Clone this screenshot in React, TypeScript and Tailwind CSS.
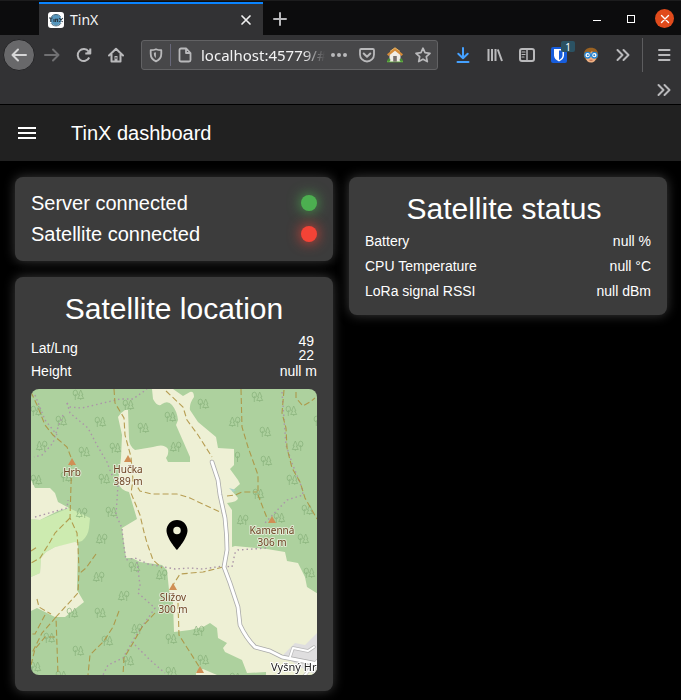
import React from "react";

type IconProps = { children: React.ReactNode; className?: string };

function Icon({ children, className = "text-[#b9b9bb]" }: IconProps) {
  return (
    <svg
      viewBox="0 0 16 16"
      className={`size-4 shrink-0 ${className}`}
      fill="none"
      stroke="currentColor"
      strokeWidth="2"
      strokeLinecap="round"
      strokeLinejoin="round"
      aria-hidden="true"
    >
      {children}
    </svg>
  );
}

function ToolButton({ label, children }: { label: string; children: React.ReactNode }) {
  return (
    <button type="button" aria-label={label} className="flex h-8 w-8 shrink-0 items-center justify-center">
      {children}
    </button>
  );
}

function TitleBar() {
  return (
    <div className="flex h-[35px] items-stretch border-t border-[#1c1c1d] bg-[#0c0c0d] pl-[39px] pt-px">
      <div className="flex w-56 items-center border-t-2 border-[#0a84ff] bg-[#323234] pl-[9px] pr-[9px]">
        <svg viewBox="0 0 16 16" className="size-4 shrink-0" aria-hidden="true">
          <rect width="16" height="16" rx="3" fill="#fff" />
          <circle cx="8" cy="8" r="5.4" fill="#5596bd" />
          <path d="M3 11.2a6 6 0 0 0 10 0M3.4 4.6a6 6 0 0 1 9.2 0" stroke="#426579" strokeWidth="1" fill="none" />
          <path d="M1 6h3.6M2.8 6v4M6 7v3M7.6 10V7.2h2V10M11.2 6l3.4 4M14.8 6l-3.6 4" stroke="#283641" strokeWidth="1.1" fill="none" />
        </svg>
        <span className="ml-[6px] flex-1 text-sm text-[#f4f4f5]">TinX</span>
        <button type="button" aria-label="Close tab" className="flex size-4 items-center justify-center">
          <Icon className="text-[#f0f0f0]">
            <path d="M4 4l8 8M12 4l-8 8" strokeWidth="1.7" />
          </Icon>
        </button>
      </div>
      <button type="button" aria-label="New tab" className="flex w-[34px] items-center justify-center">
        <Icon>
          <path d="M8 2v12M2 8h12" />
        </Icon>
      </button>
      <div className="ml-auto flex items-center pr-[7px]">
        <button type="button" aria-label="Minimize" className="flex w-[34px] justify-center">
          <span className="mt-1 h-px w-2 bg-white" />
        </button>
        <button type="button" aria-label="Maximize" className="flex w-[34px] justify-center">
          <span className="size-2 border border-white" />
        </button>
        <button
          type="button"
          aria-label="Close window"
          className="ml-[7px] flex size-[19px] items-center justify-center rounded-full bg-[#e04b1c]"
        >
          <Icon className="text-white">
            <path d="M4.5 4.5l7 7M11.5 4.5l-7 7" strokeWidth="1.4" />
          </Icon>
        </button>
      </div>
    </div>
  );
}

function AddressBar() {
  return (
    <div className="mx-[9px] flex h-[30px] min-w-0 flex-1 items-center rounded-[3px] border border-[#626264] bg-[#474749] px-[6px]">
      <Icon>
        <path d="M8 2.2C6.2 3 4.3 3.2 2.7 3.2v3.5c0 3.6 2.2 6.3 5.3 7.6 3.1-1.3 5.3-4 5.3-7.6V3.2C11.7 3.2 9.8 3 8 2.2z" strokeWidth="1.8" />
        <path d="M7.9 5.3v5.7c-1.3-1-2-2.5-2-4.3V5.7z" fill="currentColor" stroke="none" />
      </Icon>
      <span className="mx-[6px] h-[22px] w-px bg-[#68687a]" />
      <Icon>
        <path d="M4 1.5h5.3L13.5 6v7a1.5 1.5 0 0 1-1.5 1.5H4A1.5 1.5 0 0 1 2.5 13V3A1.5 1.5 0 0 1 4 1.5zM9 1.7V6h4.3" strokeWidth="1.8" />
      </Icon>
      <input
        aria-label="Address"
        readOnly
        value="localhost:45779/#/"
        className="ml-2 w-0 min-w-0 flex-1 bg-transparent text-[15px] text-[#f2f2f3] outline-none [mask-image:linear-gradient(to_right,#000_82%,transparent)]"
      />
      <div className="ml-[6px] flex items-center gap-3">
        <button type="button" aria-label="Page actions">
          <Icon>
            <g fill="currentColor" stroke="none">
              <circle cx="2" cy="8" r="2" />
              <circle cx="8" cy="8" r="2" />
              <circle cx="14" cy="8" r="2" />
            </g>
          </Icon>
        </button>
        <button type="button" aria-label="Save to Pocket">
          <Icon>
            <path d="M2.2 2h11.6c.7 0 1.2.5 1.2 1.2v4.3a7 7 0 0 1-14 0V3.2C1 2.5 1.5 2 2.2 2z" strokeWidth="1.8" />
            <path d="M4.7 6.5L8 9.7l3.3-3.2" />
          </Icon>
        </button>
        <button type="button" aria-label="Home extension">
          <svg viewBox="0 0 16 16" className="size-4" aria-hidden="true">
            <path d="M0 13.5h16v1.8H0z" fill="#5fae3f" />
            <path d="M2.5 7L8 2.5 13.5 7v7.5h-11z" fill="#f1ede5" />
            <path d="M6.2 9h3.6v5.7H6.2z" fill="#77706c" />
            <path d="M8 .7L16 7.2l-1.4 1.7L8 3.7 1.4 8.9 0 7.2z" fill="#d58b38" />
            <path d="M3 4.4L8 .8l5 3.6" stroke="#eeb965" fill="none" />
            <circle cx="2" cy="13" r="1.4" fill="#478e35" />
            <circle cx="14" cy="13" r="1.4" fill="#478e35" />
          </svg>
        </button>
        <button type="button" aria-label="Bookmark this page">
          <Icon>
            <path d="M8 1.2l2 4.5 5 .6-3.7 3.4 1 4.9L8 12.2l-4.3 2.4 1-4.9L1 6.3l5-.6z" strokeWidth="1.7" />
          </Icon>
        </button>
      </div>
    </div>
  );
}

function Chevrons() {
  return (
    <Icon>
      <path d="M2.5 3l5 5-5 5M8.5 3l5 5-5 5" />
    </Icon>
  );
}

function Toolbar() {
  return (
    <div className="border-b border-black bg-[#323234]">
      <div className="flex h-10 items-center pl-[3px] pr-px">
        <button
          type="button"
          aria-label="Back"
          className="mr-px flex size-8 shrink-0 items-center justify-center rounded-full border border-[#242426] bg-[#68686a]"
        >
          <Icon className="text-[#d6d6d7]">
            <path d="M15 8H1.5M7 2.5L1.5 8 7 13.5" />
          </Icon>
        </button>
        <ToolButton label="Forward">
          <Icon className="text-[#707072]">
            <path d="M1 8h13.5M9 2.5L14.5 8 9 13.5" />
          </Icon>
        </ToolButton>
        <ToolButton label="Reload">
          <Icon>
            <path d="M13.2 10.5a6 6 0 1 1-.6-6M14.3 1.5v5h-5" strokeLinecap="butt" />
            <path d="M14.5 2v5h-5z" fill="currentColor" stroke="none" />
          </Icon>
        </ToolButton>
        <ToolButton label="Home">
          <Icon>
            <path d="M1 8.5L8 1.7l7 6.8M3.5 7v7.5h9V7" />
            <path d="M6.5 9h3v5h-3z" fill="currentColor" stroke="none" />
            <path d="M8 10.5v1" stroke="#323234" strokeWidth="1" />
          </Icon>
        </ToolButton>
        <AddressBar />
        <ToolButton label="Downloads">
          <Icon className="text-[#45a1ff]">
            <path d="M8 1v10M3.3 6.8L8 11.3l4.7-4.5M2.5 15h11" />
          </Icon>
        </ToolButton>
        <ToolButton label="Library">
          <Icon>
            <path d="M1.5 2v12M5 2v12M8.5 2v12M10.8 2.5L15 14" strokeLinecap="butt" />
          </Icon>
        </ToolButton>
        <ToolButton label="Sidebars">
          <Icon>
            <rect x="1" y="2" width="14" height="12" rx="2" />
            <path d="M8 2v12" strokeWidth="1.5" />
            <path d="M3 5h3M3 7.5h3M3 10h2" strokeWidth="1.2" />
          </Icon>
        </ToolButton>
        <button type="button" aria-label="Bitwarden" className="relative flex size-8 shrink-0 items-center justify-center">
          <svg viewBox="0 0 16 16" className="size-4" aria-hidden="true">
            <rect width="16" height="16" rx="2" fill="#175ddc" />
            <path d="M3 2h10v6.5c0 2.5-2 4.5-5 6-3-1.5-5-3.5-5-6z" fill="#fff" />
            <path d="M8 3.5h3.5v5c0 1.8-1.3 3.2-3.5 4.4z" fill="#175ddc" />
          </svg>
          <span className="absolute right-0 top-[2px] flex h-[11px] w-[14px] items-center justify-center rounded-[2px] bg-[#2b5263] text-[10px] leading-none text-white">
            1
          </span>
        </button>
        <ToolButton label="Profile extension">
          <svg viewBox="0 0 16 16" className="size-4" aria-hidden="true">
            <path d="M1 10C0 3 4 .8 8 .8s8 2.200 7 9.200l-2 3H3z" fill="#9a6222" />
            <path d="M3 7C6 6.500 8 5.500 9 4c1 2 2.500 2.800 4 3v4c0 2.500-2 4.500-5 4.500S3 13.500 3 11z" fill="#f0b183" />
            <circle cx="4.6" cy="8.2" r="2.800" fill="#fff" stroke="#2385d5" strokeWidth="1.300" />
            <circle cx="11.4" cy="8.2" r="2.800" fill="#fff" stroke="#2385d5" strokeWidth="1.300" />
            <circle cx="4.8" cy="8.2" r="1" fill="#2f7fc0" />
            <circle cx="11.2" cy="8.2" r="1" fill="#2f7fc0" />
            <path d="M6.500 13.200h3" stroke="#b45c40" />
          </svg>
        </ToolButton>
        <ToolButton label="More tools">
          <Chevrons />
        </ToolButton>
        <span className="ml-[3px] mr-[5px] h-[34px] w-px bg-[#5d5d5f]" />
        <ToolButton label="Open menu">
          <Icon>
            <path d="M3 3h10.500M3 8h10.500M3 13h10.500" />
          </Icon>
        </ToolButton>
      </div>
      <div className="flex h-[29px] items-center justify-end pr-px">
        <ToolButton label="More bookmarks">
          <Chevrons />
        </ToolButton>
      </div>
    </div>
  );
}

function Card({ children, className }: { children: React.ReactNode; className: string }) {
  return (
    <section className={`rounded-lg bg-[#3c3c3c] px-4 shadow-[0_0_12px_#3c3c3c] ${className}`}>{children}</section>
  );
}

function CardTitle({ children, className = "" }: { children: React.ReactNode; className?: string }) {
  return <h2 className={`text-center text-[30px] leading-10 ${className}`}>{children}</h2>;
}

const statusRows = [
  { label: "Battery", value: "null %" },
  { label: "CPU Temperature", value: "null °C" },
  { label: "LoRa signal RSSI", value: "null dBm" },
];

// Deciduous and coniferous pairs; the third value swaps the order.
const trees: [number, number, number?][] = [
  [78, 395], [61, 421], [36, 411], [100, 422], [128, 405], [143, 428], [170, 417], [42, 446, 1],
  [84, 452], [115, 448], [36, 480], [104, 479], [66, 477], [82, 513, 1], [111, 512],
  [203, 404], [257, 397], [235, 422, 1], [265, 432], [291, 411], [298, 446, 1], [176, 447, 1],
  [266, 461], [292, 480], [258, 494], [243, 520, 1], [279, 518], [307, 510], [319, 421],
  [102, 539, 1], [99, 577, 1], [134, 567], [124, 596, 1], [100, 613], [72, 613], [137, 629, 1],
  [49, 638], [107, 641], [78, 651], [128, 661], [35, 667], [61, 676], [162, 575, 1],
  [171, 639], [171, 672], [303, 539], [309, 573], [199, 631, 1], [203, 660], [235, 678],
];

const fields = [
  "M152 389L153 399Q158 408 162 404Q168 400 172 405Q177 411 178 420L176 425L190 457V462H168L166 458Q169 455 168 449Q164 443 153 447L135 450Q129 446 129 438L128 410H125Q120 413 118 417L122 435L121 458L118 482Q120 490 129 492L137 519L122 528L126 558H132L140 562L162 565L167 570L169 590L173 603L174 632L190 630L203 627L210 623L217 628L218 638L227 643L223 648L225 652L242 660L247 673L266 672V676H318V594L307 587L305 577L298 563L287 561L285 552L267 549L235 546L232 547V510L227 503Q238 502 238 498L232 491L240 484L238 480L230 469L234 465V449L218 448L216 437L210 432L198 422L190 410Q189 404 194 397Q194 391 190 392L183 396L173 389Z",
  "M31 480L35 488L50 488L55 493L58 502L69 508L58 511L40 520L31 519Z",
  "M31 577L40 573L41 558L46 552L55 547L75 542L78 543L77 590L84 602L65 617H55L37 608L31 611Z",
  "M196 672L203 669L217 675H196Z",
];

const tracks = [
  "M31 392L37 405L45 425L53 435L67 447L72 460L71 485L70 518L77 533L78 547L79 570L78 593L56 617L58 675",
  "M96 554L86 568L80 573",
  "M70 518L55 533L50 542L40 558L31 563",
  "M31 551L37 547",
  "M114 389L115 403L124 418L125 435L131 457L133 480L131 493L140 515L144 532L147 543L153 560L162 568",
  "M133 480L140 491L152 494H177L190 498L207 506L222 513",
  "M166 391L183 407L187 420L198 435L212 457",
  "M241 389L242 427L248 447L258 475V495L267 518",
  "M284 390L282 413L286 428L287 448L292 468L300 482L305 498L317 519",
  "M296 392V398L303 406L310 402L315 398",
  "M223 567L203 572L180 574L173 585M178 603L179 635L200 668",
  "M119 611L113 627L104 641L90 655L88 675",
  "M155 613L142 627L133 643L124 658L123 675",
  "M45 615L37 630L35 634H31M56 617L42 633L32 653M55 637H45L35 649L31 665M37 599L39 607L51 614",
  "M227 496L235 495L242 492H257",
];

const paths = [
  "M67 403L70 407L82 408L120 399L133 399L147 389",
  "M67 403L70 413L88 428L98 447L107 462L111 473L118 485L116 515L122 528L123 540L126 560L135 558L148 564L175 569L190 568L203 569L223 566L232 567L235 553L238 550L267 548",
  "M63 415L57 430L53 443L42 455L34 457",
  "M35 395L45 420L57 435",
  "M35 517L67 508L68 500",
  "M282 392L286 445L292 463L302 488L303 495L287 500L265 523",
  "M137 562L140 585L138 593L155 608L135 637L123 658L108 665L103 675",
  "M135 645L150 660L165 673",
];

const peaks: [number, number][] = [[72, 462], [128, 459], [272, 520], [173, 587], [200, 670]];

const labels: { x: number; y: number; lines: string[] }[] = [
  { x: 72, y: 476, lines: ["Hrb"] },
  { x: 128, y: 473, lines: ["Hučka", "389 m"] },
  { x: 272, y: 534, lines: ["Kamenná", "306 m"] },
  { x: 173, y: 601, lines: ["Slížov", "300 m"] },
];

function LocationMap() {
  return (
    <svg
      viewBox="31 389 286 286"
      className="mt-[9px] block w-full rounded-lg font-['Noto_Sans',sans-serif]"
      role="img"
      aria-label="Map of the satellite location"
    >
      <rect x="31" y="389" width="286" height="286" fill="#add19e" />
      <path
        d="M31 519L40 520L69 508L90 518L89 528Q88 536 82 541L75 543L55 547L46 552L41 558L40 573L31 577Z"
        fill="#cdebb0"
      />
      {fields.map((d) => (
        <path key={d} d={d} fill="#eef0d5" />
      ))}
      <path d="M283 655L295 643L305 645L318 632V676L300 667Z" fill="#dfdedf" />
      <path d="M229 488L236 490L233 492Z" fill="#aad3c8" />
      <g fill="none" stroke="#84ad77" strokeWidth="0.8" opacity="0.8">
        {trees.map(([x, y, swap]) => (
          <g key={`${x}-${y}`} transform={`translate(${x} ${y}) scale(${swap ? -1 : 1} 1)`}>
            <ellipse cx="-2.7" cy="-2" rx="2.200" ry="2.800" />
            <path d="M-2.700 -1v6M2.700 -5L.5 0h1.200L-.3 3.500h6L3.700 0h1.200zM2.700 3.500V5" />
          </g>
        ))}
        <ellipse cx="237.500" cy="455" rx="2.200" ry="2.800" />
        <path d="M237.500 456v6" />
      </g>
      <g fill="none" stroke="#ab95a8" strokeWidth="1.400" strokeDasharray="1.500 3">
        {paths.map((d) => (
          <path key={d} d={d} />
        ))}
      </g>
      <g fill="none" stroke="#ad8f3c" strokeWidth="1.100" strokeDasharray="6 3" opacity="0.850">
        {tracks.map((d) => (
          <path key={d} d={d} />
        ))}
      </g>
      <g fill="none" strokeLinecap="round" strokeLinejoin="round">
        <path d="M290 657L293 648L308 651L314 647M318 660L304 676" stroke="#b9b9b9" strokeWidth="3.400" />
        <path
          d="M212 462L218 480L220 495L225 518L226.500 535L227 550L224 567L230 583L238 607L240 625Q246 638 255 647L270 651L282 657L318 664"
          stroke="#a9a9a9"
          strokeWidth="4.600"
        />
        <path d="M290 657L293 648L308 651L314 647M318 660L304 676" stroke="#fff" strokeWidth="2" />
        <path
          d="M212 462L218 480L220 495L225 518L226.500 535L227 550L224 567L230 583L238 607L240 625Q246 638 255 647L270 651L282 657L318 664"
          stroke="#fff"
          strokeWidth="3"
        />
      </g>
      {peaks.map(([x, y]) => (
        <path key={`${x}-${y}`} d={`M${x} ${y - 4}l4 7h-8z`} fill="#d08f55" />
      ))}
      <g
        fontSize="10"
        textAnchor="middle"
        fill="#6f4526"
        stroke="#f3f3e8"
        strokeOpacity="0.700"
        strokeWidth="2"
        strokeLinejoin="round"
        paintOrder="stroke"
      >
        {labels.map(({ x, y, lines }) => (
          <text key={lines[0]} x={x} y={y}>
            {lines.map((line, i) => (
              <tspan key={line} x={x} y={y + i * 12}>
                {line}
              </tspan>
            ))}
          </text>
        ))}
      </g>
      <text x="271" y="671" fontSize="11" fill="#222" stroke="#fff" strokeWidth="2" strokeLinejoin="round" paintOrder="stroke">
        Vyšný Hr
      </text>
      <path
        transform="translate(159 517) scale(1.500)"
        d="M12 2C8.130 2 5 5.130 5 9c0 5.250 7 13 7 13s7-7.750 7-13c0-3.870-3.130-7-7-7zm0 9.500a2.500 2.500 0 0 1 0-5 2.500 2.500 0 0 1 0 5z"
        fill="#000"
      />
    </svg>
  );
}

export default function App() {
  return (
    <div className="min-h-screen bg-black pb-[9px] font-['Liberation_Sans',Arial,sans-serif] text-white">
      <div className="font-['Noto_Sans',sans-serif]">
        <TitleBar />
        <Toolbar />
      </div>
      <header className="flex h-14 items-center bg-[#212121] pl-[15px]">
        <button type="button" aria-label="Menu" className="size-6">
          <svg viewBox="0 0 24 24" className="size-6" fill="currentColor" aria-hidden="true">
            <path d="M3 18h18v-2H3v2zm0-5h18v-2H3v2zm0-7v2h18V6H3z" />
          </svg>
        </button>
        <h1 className="ml-8 text-xl">TinX dashboard</h1>
      </header>
      <main className="grid grid-cols-2 items-start gap-4 pl-[15px] pr-[14px] pt-4">
        <div className="flex flex-col gap-4">
          <Card className="pb-3 pt-[10px] text-xl">
            <div className="flex h-[31px] items-center justify-between">
              <span>Server connected</span>
              <span className="size-4 rounded-full bg-[#4caf50] shadow-[0_0_14px_#4caf50]" />
            </div>
            <div className="flex h-[31px] items-center justify-between">
              <span>Satellite connected</span>
              <span className="size-4 rounded-full bg-[#f44336] shadow-[0_0_14px_#f44336]" />
            </div>
          </Card>
          <Card className="pb-4 pt-3 text-sm">
            <CardTitle>Satellite location</CardTitle>
            <dl className="mt-[5px]">
              <div className="flex items-center justify-between">
                <dt>Lat/Lng</dt>
                <dd className="flex flex-col pr-[3px] leading-[14px]">
                  <span>49</span>
                  <span>22</span>
                </dd>
              </div>
              <div className="flex justify-between leading-[18px]">
                <dt>Height</dt>
                <dd>null m</dd>
              </div>
            </dl>
            <LocationMap />
          </Card>
        </div>
        <Card className="pb-[11px] pt-3 text-sm">
          <CardTitle className="pr-2">Satellite status</CardTitle>
          <dl>
            {statusRows.map((row) => (
              <div key={row.label} className="flex justify-between leading-[25px]">
                <dt>{row.label}</dt>
                <dd>{row.value}</dd>
              </div>
            ))}
          </dl>
        </Card>
      </main>
    </div>
  );
}
